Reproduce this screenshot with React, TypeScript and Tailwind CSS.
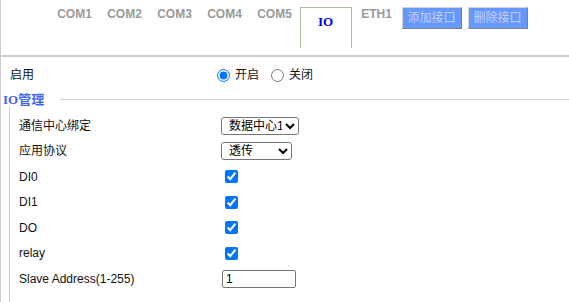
import React from "react";

const sans = "font-['Liberation_Sans','Noto_Sans_CJK_SC',sans-serif]";

function Tab({ label }: { label: string }) {
  return (
    <div className="w-[50px] mt-[7px] text-center text-[12px] leading-[15px] font-bold text-[#999999]">
      {label}
    </div>
  );
}

function ActionButton({ label, className = "" }: { label: string; className?: string }) {
  return (
    <button
      type="button"
      className={`mt-[7px] h-[22px] w-[60px] bg-[#6699ff] text-[#c8cdf5] text-[12px] leading-[20px] border border-t-[#d4d4d4] border-l-[#d4d4d4] border-r-[#808080] border-b-[#808080] ${className}`}
    >
      {label}
    </button>
  );
}

function Row({ label, children }: { label: string; children: React.ReactNode }) {
  return (
    <div className="flex items-center h-[25.5px]">
      <div className="w-[202px] text-[12px] text-[#111]">{label}</div>
      <div className="flex items-center">{children}</div>
    </div>
  );
}

function Check() {
  return <input type="checkbox" defaultChecked className="ml-[4px] w-[13px] h-[13px]" />;
}

export default function App() {
  return (
    <div className={`w-[569px] h-[302px] bg-white border-l border-[#cccccc] overflow-hidden ${sans}`}>
      {/* tab strip */}
      <div className="flex items-start h-[57px] pl-[48.5px] border-b-2 border-[#cccccc]">
        <Tab label="COM1" />
        <Tab label="COM2" />
        <Tab label="COM3" />
        <Tab label="COM4" />
        <Tab label="COM5" />
        <div className="mt-[7px] w-[52px] h-[41px] border border-b-0 border-[#a9c0a0] pt-[6px] text-center text-[13px] leading-[15px] font-bold text-[#0000ff] font-['Liberation_Serif',serif]">
          IO
        </div>
        <Tab label="ETH1" />
        <ActionButton label="添加接口" />
        <ActionButton label="删除接口" className="ml-[6px]" />
      </div>

      {/* enable row */}
      <div className="flex items-center h-[36px] pl-[9px]">
        <div className="w-[207px] text-[12px] text-[#111]">启用</div>
        <label className="flex items-center text-[12px] text-[#111]">
          <input type="radio" name="enable" defaultChecked className="w-[13px] h-[13px] mr-[5px]" />
          开启
        </label>
        <label className="flex items-center ml-[12px] text-[12px] text-[#111]">
          <input type="radio" name="enable" className="w-[13px] h-[13px] mr-[5px]" />
          关闭
        </label>
      </div>

      {/* legend */}
      <div className="flex items-center h-[13px]">
        <div className="pl-[2px] w-[59px] text-[13px] leading-[13px] font-bold text-[#4466f0] font-['Liberation_Serif','Noto_Sans_CJK_SC',serif]">
          IO管理
        </div>
        <div className="flex-1 h-px bg-[#d0d0d0]" />
      </div>

      {/* fieldset body */}
      <div className="ml-[8px] border-l border-[#cccccc] pl-[9px] pt-[7px] h-[200px]">
        <Row label="通信中心绑定">
          <select className="w-[78px] h-[18px] text-[12px] pl-[3px] border border-[#767676] rounded-[3px] bg-white text-black">
            <option>数据中心1</option>
          </select>
        </Row>
        <Row label="应用协议">
          <select className="w-[71px] h-[18px] text-[12px] pl-[3px] border border-[#767676] rounded-[3px] bg-white text-black">
            <option>透传</option>
            <option>Modbus</option>
          </select>
        </Row>
        <Row label="DI0">
          <Check />
        </Row>
        <Row label="DI1">
          <Check />
        </Row>
        <Row label="DO">
          <Check />
        </Row>
        <Row label="relay">
          <Check />
        </Row>
        <Row label="Slave Address(1-255)">
          <input
            type="text"
            defaultValue="1"
            className="ml-[1px] w-[74px] h-[18px] text-[12px] px-[3px] border border-[#767676] rounded-[2px] text-black"
          />
        </Row>
      </div>
    </div>
  );
}
